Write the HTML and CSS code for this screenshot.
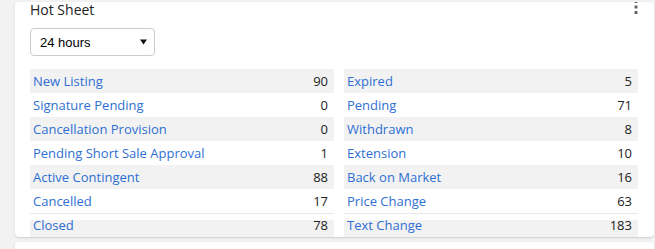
FILE: index.html
```html
<!DOCTYPE html>
<html lang="en">
<head>
    <meta charset="UTF-8">
    <meta name="viewport" content="width=device-width, initial-scale=1.0">
    <title>Hot Sheet</title>
    <link rel="stylesheet" href="styles.css">
</head>
<body>
    <div class="card">
        <div class="card-header">
            <div class="title">Hot Sheet</div>
            <svg class="kebab" width="4" height="15" viewBox="0 0 4 15">
                <rect x="0.5" y="0" width="3" height="3" fill="#666"/>
                <rect x="0.5" y="5.5" width="3" height="3" fill="#666"/>
                <rect x="0.5" y="11" width="3" height="3" fill="#666"/>
            </svg>
        </div>
        <div class="select">
            <span>24 hours</span>
            <svg width="7" height="6" viewBox="0 0 7 6"><path d="M0 0.5 H7 L3.5 5.5 Z" fill="#111"/></svg>
        </div>
        <div class="columns">
            <div class="col col-left">
                <div class="row"><a>New Listing</a><span>90</span></div>
                <div class="row"><a>Signature Pending</a><span>0</span></div>
                <div class="row"><a>Cancellation Provision</a><span>0</span></div>
                <div class="row"><a>Pending Short Sale Approval</a><span>1</span></div>
                <div class="row"><a>Active Contingent</a><span>88</span></div>
                <div class="row"><a>Cancelled</a><span>17</span></div>
                <div class="row row-last"><a>Closed</a><span>78</span></div>
            </div>
            <div class="col col-right">
                <div class="row"><a>Expired</a><span>5</span></div>
                <div class="row"><a>Pending</a><span>71</span></div>
                <div class="row"><a>Withdrawn</a><span>8</span></div>
                <div class="row"><a>Extension</a><span>10</span></div>
                <div class="row"><a>Back on Market</a><span>16</span></div>
                <div class="row"><a>Price Change</a><span>63</span></div>
                <div class="row row-last"><a>Text Change</a><span>183</span></div>
            </div>
        </div>
    </div>
    <div class="card card-next"></div>
</body>
</html>
```

FILE: styles.css
```css
body {
    margin: 0;
    padding: 2px 0 0 15px;
    background-color: #f2f2f2;
    font-family: "Open Sans", Arial, sans-serif;
    overflow: hidden;
}
.card {
    width: 639px;
    height: 235px;
    box-sizing: border-box;
    padding: 0 16px 0 15px;
    background-color: #fff;
    border-radius: 4px;
    box-shadow: 0 1px 2px rgba(0, 0, 0, 0.15);
    overflow: hidden;
}
.card-next {
    margin-top: 5px;
    height: 7px;
    border-radius: 4px 4px 0 0;
}
.card-header {
    display: flex;
    justify-content: space-between;
    align-items: flex-start;
}
.title {
    font-size: 14px;
    line-height: 18px;
    margin-top: -1px;
    color: #222;
    font-weight: 500;
}
.kebab {
    margin-top: -2px;
}
.select {
    margin-top: 9px;
    width: 125px;
    height: 28px;
    box-sizing: border-box;
    border: 1px solid #ccc;
    border-radius: 4px;
    padding: 0 7px 0 9px;
    display: flex;
    justify-content: space-between;
    align-items: center;
    font-family: "Liberation Sans", Arial, sans-serif;
    font-size: 13px;
    color: #000;
}
.columns {
    margin-top: 13px;
    display: grid;
    grid-template-columns: 304px 294px;
    gap: 10px;
}
.row {
    display: flex;
    justify-content: space-between;
    height: 24px;
    line-height: 24px;
    padding: 0 6px 0 3px;
    font-size: 13px;
    color: #222;
}
.row:nth-child(odd) {
    background-color: #f2f2f2;
}
.row a {
    color: #2f6fd3;
}
.row.row-last {
    background: linear-gradient(#e8e8e8 0, #e8e8e8 1px, #fff 1px, #fff 7px, #f2f2f2 7px);
}
```
